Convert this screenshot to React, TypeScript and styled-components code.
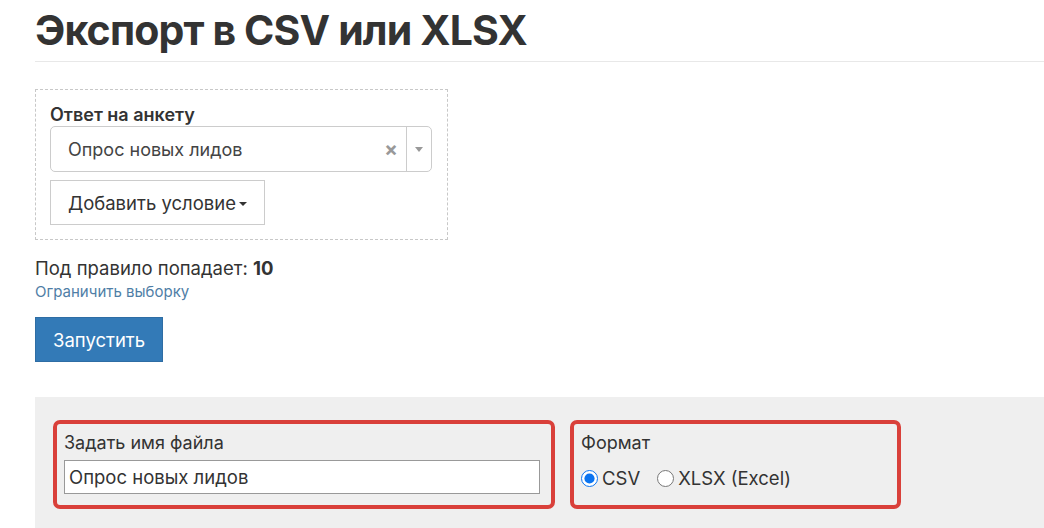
import React from "react";
import styled, { createGlobalStyle } from "styled-components";

const Global = createGlobalStyle`
  html, body { margin: 0; padding: 0; background: #fff; }
  body { font-family: Inter, "Noto Sans", sans-serif; color: #333; }
  * { box-sizing: border-box; }
`;

const Page = styled.div`
  padding: 0 0 0 35px;
  width: 1044px;
  height: 528px;
  overflow: hidden;
`;

const Title = styled.h1`
  margin: 0;
  padding: 8px 0 9px;
  font-size: 41px;
  font-weight: 700;
  letter-spacing: -0.85px;
  line-height: 44px;
  color: #333;
  border-bottom: 1px solid #e8e8e8;
`;

const RuleBox = styled.div`
  margin-top: 27px;
  width: 413px;
  border: 1px dashed #c8c8c8;
  padding: 14px 14px 14px 14px;
  display: flex;
  flex-direction: column;
  align-items: flex-start;
`;

const FieldLabel = styled.div`
  font-size: 18px;
  font-weight: 600;
  line-height: 22px;
  color: #333;
`;

const Select = styled.div`
  width: 382px;
  height: 46px;
  border: 1px solid #ccc;
  border-radius: 5px;
  display: flex;
  align-items: center;
  background: #fff;
`;

const SelectValue = styled.div`
  flex: 1;
  padding-left: 17px;
  font-size: 18px;
  color: #444;
`;

const Clear = styled.span`
  width: 24px;
  font-size: 20px;
  font-weight: 700;
  color: #999;
  text-align: center;
  margin-right: 3px;
`;

const Arrow = styled.div`
  width: 25px;
  align-self: stretch;
  border-left: 1px solid #ccc;
  display: flex;
  align-items: center;
  justify-content: center;
  &::after {
    content: "";
    border-left: 4px solid transparent;
    border-right: 4px solid transparent;
    border-top: 5px solid #999;
  }
`;

const AddButton = styled.button`
  margin-top: 8px;
  height: 45px;
  padding: 0 17px;
  border: 1px solid #ccc;
  background: #fff;
  font-family: inherit;
  font-size: 18.5px;
  color: #333;
  display: flex;
  align-items: center;
  gap: 3px;
  &::after {
    content: "";
    border-left: 4px solid transparent;
    border-right: 4px solid transparent;
    border-top: 4px solid #333;
    margin-top: 2px;
  }
`;

const Count = styled.div`
  margin-top: 17px;
  font-size: 18.5px;
  line-height: 22px;
  color: #333;
  b { font-weight: 700; }
`;

const Link = styled.a`
  display: block;
  margin-top: 3px;
  font-size: 15px;
  line-height: 20px;
  color: #4f7ea6;
  text-decoration: none;
`;

const RunButton = styled.button`
  margin-top: 15px;
  height: 45px;
  padding: 0 17px;
  border: 1px solid #2e6da4;
  background: #337ab7;
  color: #fff;
  font-family: inherit;
  font-size: 18.5px;
`;

const Panel = styled.div`
  margin-top: 35px;
  background: #efefef;
  height: 140px;
  padding: 23px 0 0 18px;
  display: flex;
  gap: 15px;
  align-items: flex-start;
`;

const RedBox = styled.div<{ $w: number }>`
  width: ${(p) => p.$w}px;
  height: 89px;
  border: 4px solid #d9403a;
  border-radius: 7px;
  padding: 8px 11px 0 7px;
`;

const PanelLabel = styled.div`
  font-size: 18px;
  line-height: 22px;
  color: #333;
`;

const TextInput = styled.input`
  margin-top: 6px;
  width: 476px;
  height: 34px;
  border: 1px solid #999;
  padding: 0 4px;
  font-family: inherit;
  font-size: 18.5px;
  color: #333;
  background: #fff;
`;

const Radios = styled.div`
  margin-top: 13px;
  display: flex;
  align-items: center;
  font-size: 18.5px;
  color: #333;
`;

const RadioLabel = styled.label`
  display: flex;
  align-items: center;
  margin-right: 17px;
  input {
    margin: 0 4px 0 0;
    width: 17px;
    height: 17px;
    accent-color: #0b74f0;
  }
`;

export default function App() {
  return (
    <>
      <Global />
      <Page>
        <Title>Экспорт в CSV или XLSX</Title>
        <RuleBox>
          <FieldLabel>Ответ на анкету</FieldLabel>
          <Select>
            <SelectValue>Опрос новых лидов</SelectValue>
            <Clear>×</Clear>
            <Arrow />
          </Select>
          <AddButton>Добавить условие</AddButton>
        </RuleBox>
        <Count>
          Под правило попадает: <b>10</b>
        </Count>
        <Link href="#">Ограничить выборку</Link>
        <RunButton>Запустить</RunButton>
        <Panel>
          <RedBox $w={502}>
            <PanelLabel>Задать имя файла</PanelLabel>
            <TextInput defaultValue="Опрос новых лидов" />
          </RedBox>
          <RedBox $w={331}>
            <PanelLabel>Формат</PanelLabel>
            <Radios>
              <RadioLabel>
                <input type="radio" name="fmt" defaultChecked />
                CSV
              </RadioLabel>
              <RadioLabel>
                <input type="radio" name="fmt" />
                XLSX (Excel)
              </RadioLabel>
            </Radios>
          </RedBox>
        </Panel>
      </Page>
    </>
  );
}
